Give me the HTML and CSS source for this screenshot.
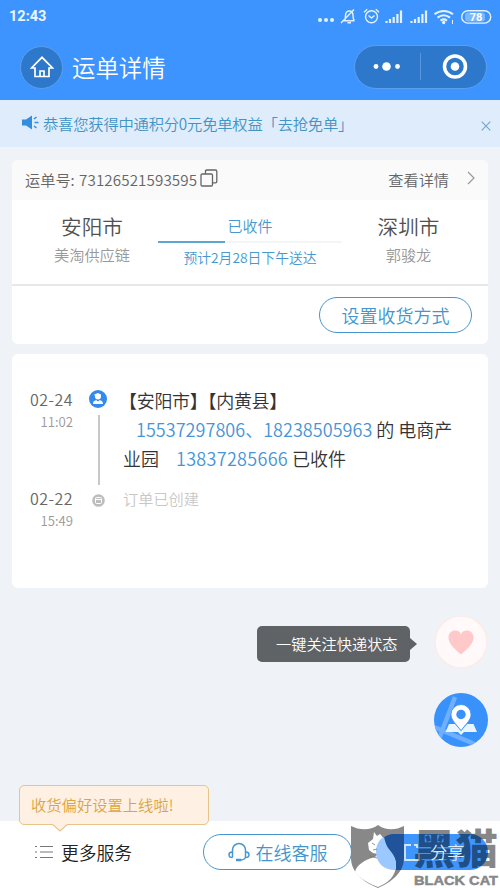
FILE: index.html
```html
<!DOCTYPE html>
<html lang="zh-CN">
<head>
<meta charset="utf-8">
<title>运单详情</title>
<link rel="stylesheet" href="styles.css">
</head>
<body>
<div class="phone">
  <header class="header">
    <div class="status">
      <span class="clock">12:43</span>
      <svg class="status-icons" width="176" height="18" viewBox="0 0 176 18" fill="none" stroke="#e4f2ff" stroke-width="1.4">
        <g fill="#e4f2ff" stroke="none"><circle cx="3" cy="12" r="2"/><circle cx="9" cy="12" r="2"/><circle cx="15" cy="12" r="2"/></g>
        <path d="M25.5 12.7h12M27.5 12.500c1-1.500 1-3 1-5 0-3 1.500-4.500 3.700-4.500s3.800 1.500 3.800 4.500.2 3.500 1.200 5M30.500 14.700h3.500M24 15 37 1.500"/>
        <circle cx="54.500" cy="8.800" r="6"/><path d="M51.500 7.500l3 2.500 3-2.500M47 4.200l3.200-3M58.800 1.200l3.200 3"/>
        <path stroke-width="2.200" d="M69.500 15v-2M73 15v-4M76.700 15V9M80.400 15V6M84 15V2.500M94.500 15v-2M98 15v-4M101.700 15V9M105.400 15V6M109 15V2.500"/>
        <path stroke-width="2" d="M117.500 6.300c5.500-4.500 13-4.500 18.500 0M120.500 9.600c4-3 8.500-3 12.500 0M123.500 12.600c2-1.500 4.500-1.500 6.500 0"/><circle cx="126.700" cy="14.500" r="1" fill="#e4f2ff"/><path stroke-width="1" d="M135.500 12v4"/>
        <rect x="144.700" y="2.700" width="29" height="12.400" rx="6.200"/><rect x="148" y="4.500" width="20" height="9" rx="3" fill="#7db8ff" stroke="none"/>
        <text class="battery" x="159" y="13.200" text-anchor="middle">78</text>
      </svg>
    </div>
    <div class="nav">
      <div class="home">
        <svg width="24" height="24" viewBox="0 0 24 24" fill="none" stroke="#fff" stroke-width="1.700"><path d="M1.500 13 12 2.300 22.500 13H19v8.500H5V13zM10 21v-5h4v5"/></svg>
      </div>
      <h1 class="title">运单详情</h1>
      <div class="capsule">
        <svg width="132" height="42" viewBox="0 0 132 42"><g fill="#fff"><circle cx="21" cy="20.500" r="2.400"/><circle cx="31.500" cy="20.500" r="4.300"/><circle cx="42.500" cy="20.500" r="2.400"/><circle cx="100" cy="20.500" r="4.300"/></g><path d="M65.500 7v27" stroke="#5797df"/><circle cx="100" cy="20.500" r="10.500" fill="none" stroke="#fff" stroke-width="3.500"/></svg>
      </div>
    </div>
  </header>

  <div class="notice">
    <svg width="17" height="15" viewBox="0 0 17 15"><path d="M0 4.500h4L10 .5v14l-6-4H0z" fill="#348edf"/><path d="M12 4l2.500-2M12.500 7.500H16.500M12 11l2.500 2" stroke="#348edf" stroke-width="1.500"/></svg>
    <span class="notice-text">恭喜您获得中通积分0元免单权益「去抢免单」</span>
    <svg class="close" width="10" height="10" viewBox="0 0 10 10"><path d="M.7.7l8.600 8.600M9.300.7.7 9.300" stroke="#6ca6cf" stroke-width="1.100"/></svg>
  </div>

  <main class="content">
    <section class="card waybill">
      <div class="waybill-head">
        <span>运单号: <span class="number">73126521593595</span></span>
        <svg class="copy" width="18" height="18" viewBox="0 0 18 18" fill="none" stroke="#666" stroke-width="1.300"><rect x="1" y="5" width="11.500" height="12" rx="1.300"/><path d="M5.500 5V2.300Q5.500 1 6.800 1h8.700q1.300 0 1.300 1.300v10.200q0 1.300-1.300 1.300h-3"/></svg>
        <span class="detail">查看详情</span>
        <svg width="8" height="14" viewBox="0 0 8 14" fill="none" stroke="#999" stroke-width="1.200"><path d="M1 1l6 6-6 6"/></svg>
      </div>
      <div class="route">
        <div class="place"><div class="city">安阳市</div><div class="who">美淘供应链</div></div>
        <div class="progress"><div class="state">已收件</div><div class="track"><div class="done"></div></div><div class="eta">预计2月28日下午送达</div></div>
        <div class="place"><div class="city">深圳市</div><div class="who">郭骏龙</div></div>
      </div>
      <div class="waybill-foot"><div class="outline-btn">设置收货方式</div></div>
    </section>

    <section class="card timeline">
      <div class="event current">
        <div class="when"><div class="date">02-24</div><div class="time">11:02</div></div>
        <div class="rail">
          <svg width="18" height="18" viewBox="0 0 18 18"><circle cx="9" cy="9" r="9" fill="#348aec"/><path d="M5.300 4.600 9 3l3 1.500v2a3 3 0 0 1-6 0zM4 14c0-3 2-3.800 3.500-3.800L9 11.500l1.500-1.300c1.500 0 3.500.8 3.500 3.800z" fill="#fff"/></svg>
          <div class="line"></div>
        </div>
        <div class="message">
          <div class="row-a">【安阳市】【内黄县】</div>
          <div class="row-b"><a>15537297806、18238505963</a> 的 电商产</div>
          <div class="row-c">业园<a class="third">13837285666</a> 已收件</div>
        </div>
      </div>
      <div class="event">
        <div class="when"><div class="date">02-22</div><div class="time">15:49</div></div>
        <div class="rail"><svg class="order-dot" width="13" height="13" viewBox="0 0 13 13"><circle cx="6.500" cy="6.500" r="6.300" fill="#bdbdbd"/><rect x="3.500" y="3.500" width="6" height="6" rx="1" fill="none" stroke="#fff"/><path d="M4 5.500h5" stroke="#fff"/></svg></div>
        <div class="created">订单已创建</div>
      </div>
    </section>
  </main>

  <div class="follow">
    <div class="tip">一键关注快递状态</div>
    <svg width="54" height="54" viewBox="0 0 54 54"><circle cx="27" cy="27" r="26" fill="#fffaf9" stroke="#fbeceb" stroke-width="1.500"/><path d="M27 39.500C21 34 14.500 29 14.500 22.500c0-7 9-9.500 12.500-3.500 3.500-6 12.500-3.500 12.500 3.500C39.500 29 33 34 27 39.500z" fill="#ffc9ca"/></svg>
  </div>
  <svg class="map" width="54" height="54" viewBox="0 0 54 54">
    <defs><clipPath id="disc"><circle cx="27" cy="27" r="27"/></clipPath></defs>
    <g clip-path="url(#disc)"><path d="M0 0h54v54H0z" fill="#3991fc"/><path d="M0 34 48 54M5 46 21 4" stroke="#6eb0fe" stroke-width="4.500" fill="none"/></g>
    <path d="M15 31h6l6 7 6-7h6.500l3.500 8H30l-3 3-3-3H11.500z" fill="#e9f6ff"/>
    <path d="M27 37.500C22 31 17 27 17 21.500a10 10 0 0 1 20 0C37 27 32 31 27 37.500z" fill="#fff" stroke="#3991fc" stroke-width=".8"/><circle cx="27" cy="21.500" r="4.700" fill="#3991fc"/>
  </svg>

  <footer class="footer">
    <div class="more">
      <svg width="18" height="14" viewBox="0 0 18 14"><path d="M0 1.500h2M0 7h2M0 12.500h2M5 1.500h13M5 7h13M5 12.500h13" stroke="#777" stroke-width="1.200"/></svg>
      <span>更多服务</span>
    </div>
    <div class="outline-btn service">
      <svg width="22" height="20" viewBox="0 0 22 20" fill="none" stroke="#4896d0" stroke-width="1.500"><path d="M4.500 15.500V8a6.500 6.500 0 0 1 13 0v6.500c0 2-2 3.500-4.500 3.500"/><path d="M4.500 10C2 10 1 11 1 12.700s1 2.800 3.500 2.800M17.500 10c2.500 0 3.500 1 3.500 2.700s-1 2.800-3.500 2.800"/><path d="M8 18h5" stroke-width="2.500"/></svg>
      <span>在线客服</span>
    </div>
    <div class="share">
      <svg width="17" height="17" viewBox="0 0 17 17" fill="none" stroke="#d6e6f7" stroke-width="1.800"><path d="M7 1H1v15h14v-6M10 1h3v3"/></svg>
      <span class="share-label">分享</span>
    </div>
    <div class="bubble">收货偏好设置上线啦!
      <svg class="bubble-tail" width="16" height="8" viewBox="0 0 16 8"><path d="M0 0 8 7 16 0" fill="#fef0e2" stroke="#e7c488" stroke-width="1.200"/></svg>
    </div>
    <svg class="watermark" width="150" height="63" viewBox="0 0 150 63">
      <path fill="#888" d="M1 1C9 5 20 6 28 0c8 6 18 5 26 1V33C54 47 42 57 28 63 13 57 1 47 1 33z"/>
      <path fill="#21539a" d="M54 9H42Q36 10 32 14L38 44Q41 45 45 45H51Q54 39 54 33z"/>
      <path class="cat" d="M24 7 23 14 18 18 19 25 23 28 28 29 25 32C16 34 6 40 5 47 10 54 20 59 28 62 38 58 46 51 46 40 46 31 40 27 37 22 34 17 35 14 30 9L27 11z"/>
      <path class="cat-blue" d="M26 27C26 19 30 14 34 12 35 16 36 20 38 23 42 28 46 32 46 40Q46 43 45 45C34 45 26 38 26 27z"/>
      <path d="M22 18l3 2M23 25l4-1M20 31l7 2" stroke="#777" stroke-width=".8"/>
      <text class="mark-cn" x="63" y="38.500" textLength="85" lengthAdjust="spacingAndGlyphs">黑猫</text>
      <text class="mark-en" x="64" y="60" textLength="84" lengthAdjust="spacingAndGlyphs">BLACK CAT</text>
    </svg>
  </footer>
</div>
</body>
</html>
```
FILE: styles.css
```css
* { box-sizing: border-box; }
body { margin: 0; }
.phone {
  position: relative;
  display: flex;
  flex-direction: column;
  width: 500px;
  height: 888px;
  overflow: hidden;
  background: #eff3f7;
  font-family: "Noto Sans CJK SC", sans-serif;
  font-weight: 350;
  white-space: nowrap;
}
svg { display: block; flex: none; }

.header { height: 100px; background: #3d94ff; }
.status { display: flex; justify-content: space-between; height: 34px; padding: 8px 7px 0 9px; }
.clock { font: 700 14.500px/18px Roboto, sans-serif; color: #ecf6ff; }
.battery { font: 700 11px Roboto, sans-serif; fill: #fff; stroke: none; }
.nav { display: flex; align-items: center; height: 66px; padding: 0 13px 0 20px; }
.home {
  display: grid;
  place-items: center;
  width: 43px;
  height: 43px;
  border: 1px solid #5a9fee;
  border-radius: 50%;
  background: #2e78cc;
}
.title { flex: 1; margin: 0 0 0 9px; font-size: 23.400px; line-height: 34px; font-weight: 350; color: #fff; }
.capsule { width: 133px; height: 44px; border: 1px solid #5a9fee; border-radius: 22px; background: #2e78cc; }

.notice {
  display: flex;
  align-items: center;
  height: 47px;
  padding: 1px 9px 0 22px;
  background: #deecfc;
  color: #4294c5;
}
.notice-text { flex: 1; margin-left: 4px; margin-top: -2px; font-size: 15.300px; letter-spacing: -.2px; line-height: 24px; }
.notice svg:first-child { margin-top: -4px; }
.notice .close { margin-top: 3px; }

.content { display: flex; flex-direction: column; gap: 10px; padding: 13px 12px 0; }
.card { border-radius: 6px; background: #fff; overflow: hidden; }
.waybill { height: 184px; }
.waybill-head {
  display: flex;
  align-items: center;
  height: 40px;
  padding: 0 13px 2px;
  background: #fafafa;
  font-size: 15.200px;
  line-height: 24px;
  color: #666;
}
.number { margin-left: 1px; letter-spacing: .1px; }
.copy { margin: -3px auto 0 3px; }
.detail { margin-right: 18px; }
.waybill-head svg:last-child { margin-top: -2px; }
.route { display: flex; height: 86px; border-bottom: 2px solid #e7e8ea; }
.place { width: 160px; text-align: center; }
.place:last-child { width: 133px; }
.city { margin-top: 11px; font-size: 20.600px; line-height: 30px; color: #505050; }
.who { margin-top: 1px; font-size: 15.200px; line-height: 24px; color: #999; }
.progress { width: 184px; margin-left: -14px; color: #4698cf; text-align: center; }
.state { padding-top: 14px; font-size: 15px; line-height: 24px; }
.track { height: 2px; margin-top: 3px; background: #f3f5f7; }
.done { width: 67px; height: 2px; background: #5da8d2; }
.eta { margin-top: 3px; font-size: 13.800px; line-height: 22px; }
.waybill-foot { display: flex; justify-content: flex-end; padding: 11px 16px 0; }
.outline-btn {
  display: flex;
  align-items: center;
  justify-content: center;
  width: 153px;
  height: 36px;
  border: 1.500px solid #4795cc;
  border-radius: 18px;
  background: #fff;
  color: #4395cc;
  font-size: 18px;
  line-height: 26px;
}

.timeline { height: 234px; padding-top: 32px; }
.event { display: flex; }
.current { height: 99px; }
.when { width: 61px; text-align: right; }
.date { margin-top: -1px; font-size: 16px; letter-spacing: .5px; line-height: 28px; color: #666; }
.time { margin-top: 1px; font-size: 13.200px; line-height: 16px; color: #999; }
.rail { display: flex; flex-direction: column; align-items: center; width: 50px; padding-top: 4px; }
.line { width: 1.500px; height: 75px; margin: 7px 0 0 2px; background: #c8c8c8; }
.order-dot { margin-top: 5px; }
.message { color: #333; font-size: 18px; line-height: 29px; }
.message a { color: #4894d6; letter-spacing: .04px; }
.row-a { margin-left: -4px; letter-spacing: -.3px; }
.row-b { padding-left: 13px; }
.message .third { margin-left: 17px; letter-spacing: .3px; }
.created { font-size: 15.200px; line-height: 26px; color: #c8c8c8; }

.follow { display: flex; align-items: center; justify-content: flex-end; gap: 24px; height: 54px; margin: 27px 12px 0; }
.tip {
  position: relative;
  width: 153px;
  height: 36px;
  margin-top: 3px;
  padding-left: 19px;
  border-radius: 5px;
  background: #606365;
  color: #fff;
  font-size: 15.200px;
  line-height: 35px;
}
.tip::after {
  content: "";
  position: absolute;
  left: 153px;
  top: 12px;
  border: 6px solid transparent;
  border-left: 7px solid #606365;
  border-right: 0;
}
.map { margin: 24px 12px 0 auto; }

.footer {
  position: relative;
  display: flex;
  align-items: flex-start;
  height: 67px;
  margin-top: auto;
  padding: 13px 12px 0 35px;
  background: #fff;
}
.more { display: flex; align-items: center; gap: 8px; width: 168px; height: 36px; color: #222; font-size: 17.800px; line-height: 26px; }
.service { width: 149px; gap: 6px; }
.share {
  display: flex;
  align-items: center;
  gap: 9px;
  width: 112px;
  height: 36px;
  margin-left: auto;
  padding-left: 28px;
  border-radius: 18px;
  background: #3e95ff;
  color: #dcebf8;
  font-size: 17.300px;
  line-height: 26px;
}
.share-label { position: relative; z-index: 2; }
.bubble {
  position: absolute;
  left: 19px;
  top: -36px;
  width: 190px;
  height: 40px;
  padding-left: 11px;
  border: 1.200px solid #e7c488;
  border-radius: 5px;
  background: #fef0e2;
  color: #dca543;
  font-size: 15.300px;
  line-height: 37px;
}
.bubble-tail { position: absolute; left: 32px; top: 37.500px; }
.watermark { position: absolute; left: 350px; top: 4px; overflow: visible; }
.cat { fill: #fff; }
.cat-blue { fill: #9bc8ff; }
.mark-cn { font: 900 41px "Noto Sans CJK SC", sans-serif; fill: #000; fill-opacity: .47; }
.mark-en { font: 700 13.500px "Liberation Sans", sans-serif; fill: #888; stroke: #888; stroke-width: .5; }
```
